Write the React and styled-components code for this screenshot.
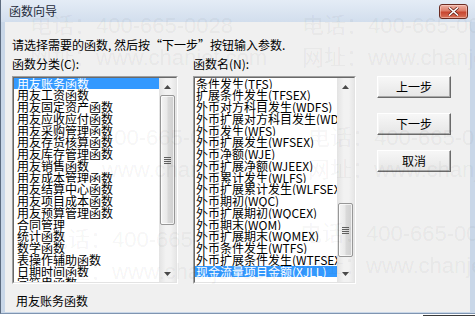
import React from 'react';
import styled, { createGlobalStyle } from 'styled-components';

const GlobalStyle = createGlobalStyle`
html, body {
  margin:0;
  padding:0;
  background:#ffffff;
}
body {
  font-family: "Noto Sans CJK SC", "Liberation Sans", sans-serif;
  font-size:12px;
  color:#000;
}
`

const Page = styled.div`
width:475px;
height:318px;
position:relative;
overflow:hidden;
`
const Window = styled.div`
width:475px;
height:314px;
box-sizing:border-box;
display:flex;
flex-direction:column;
background:#c9d7e8;
border-left:1px solid #5d6c80;
border-bottom:1px solid #7f95b1;
`
const TitleBar = styled.div`
height:22px;
flex:none;
display:flex;
align-items:center;
padding:0 7px 0 8px;
background:linear-gradient(#e4ecf6, #d2deed);
`
const Title = styled.span`
font-size:12px;
line-height:14px;
color:#1e2a3a;
`
const CloseBtn = styled.div`
margin-left:auto;
width:29px;
height:15px;
box-sizing:border-box;
border:1px solid #6b2c22;
border-radius:3px;
background:linear-gradient(#eeb1a4 0%, #dc7d69 45%, #c84630 55%, #d7735a 100%);
display:flex;
align-items:center;
justify-content:center;
box-shadow:inset 0 0 0 1px rgba(255,220,210,0.5);
`
const Client = styled.div`
flex:1;
margin:0 5px 1px 4px;
background:#f0f0f0;
padding:16px 0 0 7px;
box-sizing:border-box;
`
const Prompt = styled.div`
height:14px;
line-height:14px;
white-space:nowrap;
`
const Columns = styled.div`
display:flex;
margin-top:5px;
`
const Col = styled.div`
width:${p => p.$w}px;
margin-right:${p => p.$gap || 0}px;
display:flex;
flex-direction:column;
`
const Label = styled.div`
height:14px;
line-height:14px;
white-space:nowrap;
`
const ListBox = styled.div`
margin-top:5px;
height:208px;
box-sizing:border-box;
border:1px solid;
border-color:#a0a0a0 #ffffff #ffffff #a0a0a0;
`
const ListInner = styled.div`
height:100%;
box-sizing:border-box;
border:1px solid;
border-color:#696969 #e3e3e3 #e3e3e3 #696969;
background:#ffffff;
display:flex;
`
const Items = styled.div`
flex:1;
overflow:hidden;
padding-top:0;
`
const ItemsTrack = styled.div`
margin-top:-0.5px;
`
const Item = styled.div`
height:11.75px;
line-height:11.75px;
padding-left:${p => p.$pad}px;
white-space:nowrap;
overflow:hidden;
background:${p => (p.$sel ? '#3399ff' : 'transparent')};
color:${p => (p.$sel ? '#ffffff' : '#000000')};
`
const ScrollBar = styled.div`
width:17px;
flex:none;
display:flex;
flex-direction:column;
background:linear-gradient(90deg, #e3e3e3, #f2f2f2 40%, #f2f2f2 70%, #e6e6e6);
`
const Arrow = styled.div`
height:17px;
flex:none;
display:flex;
align-items:center;
justify-content:center;
`
const Track = styled.div`
flex:1;
`
const Thumb = styled.div`
margin:${p => p.$top}px 1px 0 1px;
height:${p => p.$h}px;
box-sizing:border-box;
border:1px solid #979797;
border-radius:2px;
background:linear-gradient(90deg, #f4f4f4, #e9e9e9 45%, #d9d9d9 55%, #cfcfcf);
box-shadow:inset 0 0 0 1px rgba(255,255,255,0.7);
display:flex;
align-items:center;
justify-content:center;
`
const Grip = styled.div`
width:7px;
height:7px;
background:repeating-linear-gradient(#5f5f5f 0 1px, transparent 1px 2px);
`
const Under = styled.div`
margin-top:10px;
height:14px;
line-height:14px;
padding-left:4px;
`
const ButtonCol = styled.div`
width:74px;
padding-top:19px;
display:flex;
flex-direction:column;
gap:15px;
`
const Button = styled.div`
height:22px;
box-sizing:border-box;
border:1px solid;
border-color:#ffffff #6a6a6a #6a6a6a #ffffff;
box-shadow:inset -1px -1px 0 #a8a8a8, inset 1px 1px 0 #f6f6f6;
background:linear-gradient(#f7f7f7, #e6e6e6);
display:flex;
align-items:center;
justify-content:center;
line-height:14px;
`
const Desktop = styled.div`
height:4px;
background:#ffffff;
display:flex;
justify-content:flex-end;
`
const DeskLine = styled.div`
width:52px;
border-top:1px solid #3a3a3a;
margin-top:1px;
`
const Mark = styled.div`
position:absolute;
left:${p => p.$x}px;
top:${p => p.$y}px;
font-family:"Liberation Sans", "Noto Sans CJK SC", sans-serif;
font-size:22px;
line-height:22px;
white-space:nowrap;
color:rgba(0,0,0,0.055);
pointer-events:none;
`

const categories = [
  '用友账务函数', '用友工资函数', '用友固定资产函数', '用友应收应付函数',
  '用友采购管理函数', '用友存货核算函数', '用友库存管理函数', '用友销售函数',
  '用友成本管理函数', '用友结算中心函数', '用友项目成本函数', '用友预算管理函数',
  '合同管理', '统计函数', '数学函数', '表操作辅助函数', '日期时间函数', '字符串函数',
];

const functions = [
  '条件发生(TFS)', '扩展条件发生(TFSEX)', '外币对方科目发生(WDFS)',
  '外币扩展对方科目发生(WDFSEX)', '外币发生(WFS)', '外币扩展发生(WFSEX)',
  '外币净额(WJE)', '外币扩展净额(WJEEX)', '外币累计发生(WLFS)',
  '外币扩展累计发生(WLFSEX)', '外币期初(WQC)', '外币扩展期初(WQCEX)',
  '外币期末(WQM)', '外币扩展期末(WQMEX)', '外币条件发生(WTFS)',
  '外币扩展条件发生(WTFSEX)', '现金流量项目金额(XJLL)',
];

const marks = [
  [30, 15, '电话：400-665-0028'], [30, 47, '网址：www.chanjet.com'],
  [302, 15, '电话：400-665-0028'], [302, 47, '网址：www.chanjet.com'],
  [36, 127, '电话：400-665-0028'], [36, 159, '网址：www.chanjet.com'],
  [308, 127, '电话：400-665-0028'], [308, 159, '网址：www.chanjet.com'],
  [46, 229, '电话：400-665-0028'], [46, 261, '网址：www.chanjet.com'],
  [300, 223, '电话：400-665-0028'], [300, 255, '网址：www.chanjet.com'],
];

function UpIcon({ down }) {
  return (
    <svg width="7" height="4" viewBox="0 0 7 4">
      <path d={down ? 'M0 0h7L3.5 4z' : 'M0 4h7L3.5 0z'} fill="#4a4a4a" />
    </svg>
  );
}

function List({ items, selected, thumbTop, thumbH, pad }) {
  return (
    <ListBox>
      <ListInner>
        <Items>
          <ItemsTrack>
            {items.map((t, i) => (
              <Item key={t} $pad={pad} $sel={i === selected}>{t}</Item>
            ))}
          </ItemsTrack>
        </Items>
        <ScrollBar>
          <Arrow><UpIcon /></Arrow>
          <Track>
            <Thumb $top={thumbTop} $h={thumbH}><Grip /></Thumb>
          </Track>
          <Arrow><UpIcon down /></Arrow>
        </ScrollBar>
      </ListInner>
    </ListBox>
  );
}

export default function App() {
  return (
    <Page>
      <GlobalStyle />
      <Window>
        <TitleBar>
          <Title>函数向导</Title>
          <CloseBtn>
            <svg width="11" height="9" viewBox="0 0 11 9">
              <path d="M1 0.5L5.5 4.5L10 0.5M1 8.5L5.5 4.5L10 8.5" stroke="#5a1a12" strokeWidth="3" fill="none" />
              <path d="M1 0.5L5.5 4.5L10 0.5M1 8.5L5.5 4.5L10 8.5" stroke="#ffffff" strokeWidth="1.6" fill="none" />
            </svg>
          </CloseBtn>
        </TitleBar>
        <Client>
          <Prompt>请选择需要的函数, 然后按“下一步”按钮输入参数.</Prompt>
          <Columns>
            <Col $w={166} $gap={15}>
              <Label>函数分类(C):</Label>
              <List items={categories} selected={0} thumbTop={0} thumbH={130} pad={3} />
              <Under>用友账务函数</Under>
            </Col>
            <Col $w={163} $gap={21}>
              <Label>函数名(N):</Label>
              <List items={functions} selected={16} thumbTop={108} thumbH={54} pad={1} />
            </Col>
            <ButtonCol>
              <Button>上一步</Button>
              <Button>下一步</Button>
              <Button>取消</Button>
            </ButtonCol>
          </Columns>
        </Client>
      </Window>
      <Desktop><DeskLine /></Desktop>
      {marks.map(([x, y, t], i) => (
        <Mark key={i} $x={x} $y={y}>{t}</Mark>
      ))}
    </Page>
  );
}
